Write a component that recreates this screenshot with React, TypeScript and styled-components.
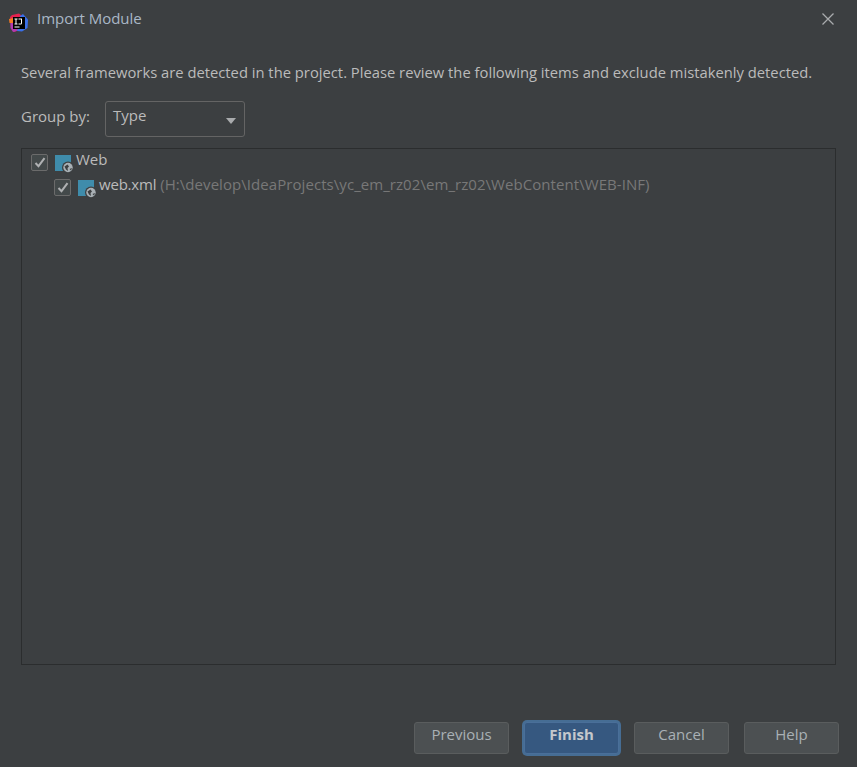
import React from 'react';
import styled, { createGlobalStyle } from 'styled-components';

const Global = createGlobalStyle`
  html, body { margin: 0; padding: 0; background: #3c3f41; }
  body { font-family: "Open Sans", "Noto Sans", sans-serif; font-size: 15px; color: #bbbbbb; }
`;

function AppLogo() {
  return (
    <LogoSvg width="20" height="20" viewBox="0 0 20 20">
      <path d="M1 4 L3 2 L10 0.5 L13 3 L12 16 L5 19 L2 14 Z" fill="#e6214f" />
      <path d="M11 3 L14 1 L19 6.5 L18.5 15 L13 18.5 L8 18 Z" fill="#3a6fe8" />
      <path d="M1.5 10 L6 10 L8 18 L4 19 L1.5 15 Z" fill="#b23ab0" />
      <path d="M0 6 L4 5 L4 10 L0.5 10 Z" fill="#f57a22" />
      <rect x="4" y="4" width="12" height="12" fill="#000000" />
      <rect x="5.5" y="13.5" width="5" height="1" fill="#ffffff" />
      <path d="M5.5 5.5 H8.5 V6.5 H7.5 V10.5 H8.5 V11.5 H5.5 V10.5 H6.5 V6.5 H5.5 Z M9.5 5.5 H13 V10 Q13 11.5 11.5 11.5 H9.5 V10.5 H12 V6.5 H9.5 Z" fill="#ffffff" />
    </LogoSvg>
  );
}

function CloseIcon() {
  return (
    <svg width="14" height="14" viewBox="0 0 14 14">
      <path d="M1.5 1.5 L12.5 12.5 M12.5 1.5 L1.5 12.5" stroke="#a9abad" strokeWidth="1.3" fill="none" />
    </svg>
  );
}

function WebIcon() {
  return (
    <FrameworkSvg width="19" height="19" viewBox="0 0 19 19">
      <rect x="0" y="0" width="16" height="16" fill="#3f8cab" />
      <circle cx="13" cy="12.5" r="6" fill="#3c3f41" />
      <circle cx="13" cy="12.5" r="4.7" fill="#a9b0b5" />
      <path d="M9.5 11.5 L12.5 9.5 L14 11.5 L12.5 13 L13 16 L11 14.5 Z M14.5 14 L17 13 L16 15.5 Z" fill="#3c3f41" />
    </FrameworkSvg>
  );
}

function CheckMark() {
  return (
    <svg width="12" height="11" viewBox="0 0 12 11">
      <path d="M1.5 6 L4.5 9.2 L10.5 1.2" stroke="#afb1b3" strokeWidth="2" fill="none" />
    </svg>
  );
}

export default function App() {
  return (
    <Dialog>
      <Global />
      <TitleBar>
        <TitleGroup>
          <AppLogo />
          <Title>Import Module</Title>
        </TitleGroup>
        <CloseButton><CloseIcon /></CloseButton>
      </TitleBar>

      <Content>
        <Description>
          Several frameworks are detected in the project. Please review the following items and exclude mistakenly detected.
        </Description>

        <GroupRow>
          <GroupLabel>Group by:</GroupLabel>
          <Combo>
            <span>Type</span>
            <Arrow />
          </Combo>
        </GroupRow>

        <TreePanel>
          <TreeRow $depth={0}>
            <Checkbox><CheckMark /></Checkbox>
            <WebIcon />
            <RowLabel>Web</RowLabel>
          </TreeRow>
          <TreeRow $depth={1}>
            <Checkbox><CheckMark /></Checkbox>
            <WebIcon />
            <RowLabel><FileName>web.xml</FileName> <PathHint>(H:\develop\IdeaProjects\yc_em_rz02\em_rz02\WebContent\WEB-INF)</PathHint></RowLabel>
          </TreeRow>
        </TreePanel>
      </Content>

      <Footer>
        <Button>Previous</Button>
        <Button $primary>Finish</Button>
        <Button>Cancel</Button>
        <Button>Help</Button>
      </Footer>
    </Dialog>
  );
}

const Dialog = styled.div`
  width: 857px;
  height: 767px;
  background: #3c3f41;
  display: flex;
  flex-direction: column;
  overflow: hidden;
`;

const TitleBar = styled.div`
  height: 37px;
  display: flex;
  align-items: center;
  justify-content: space-between;
  padding: 0 22px 0 9px;
`;

const TitleGroup = styled.div`
  display: flex;
  align-items: center;
  gap: 8px;
`;

const LogoSvg = styled.svg`
  margin-top: 8px;
`;

const FrameworkSvg = styled.svg`
  margin: 3px 0 0 7px;
  flex: none;
`;

const Title = styled.span`
  color: #a9b7c6;
  margin-bottom: 2px;
`;

const CloseButton = styled.div`
  display: flex;
`;

const Content = styled.div`
  flex: 1;
  display: flex;
  flex-direction: column;
  padding: 24px 21px 0;
`;

const Description = styled.div`
  font-size: 14.77px;
  line-height: 22px;
  white-space: nowrap;
`;

const GroupRow = styled.div`
  display: flex;
  align-items: center;
  gap: 15px;
  margin-top: 18px;
  height: 36px;
`;

const GroupLabel = styled.span`
  margin-bottom: 6px;
`;

const Combo = styled.div`
  box-sizing: border-box;
  width: 140px;
  height: 36px;
  border: 1px solid #646464;
  border-radius: 3px;
  padding: 0 8px 8px 7px;
  display: flex;
  align-items: center;
  justify-content: space-between;
`;

const Arrow = styled.div`
  width: 0;
  height: 0;
  margin-top: 12px;
  border-left: 5.5px solid transparent;
  border-right: 5.5px solid transparent;
  border-top: 6px solid #a9abad;
`;

const TreePanel = styled.div`
  box-sizing: border-box;
  width: 815px;
  height: 517px;
  margin-top: 11px;
  border: 1px solid #2b2d2e;
  padding-top: 1px;
`;

const TreeRow = styled.div<{ $depth: number }>`
  height: 25px;
  display: flex;
  align-items: center;
  padding-left: ${p => 9 + p.$depth * 23}px;
`;

const Checkbox = styled.div`
  box-sizing: border-box;
  width: 17px;
  height: 17px;
  flex: none;
  border: 1px solid #6b6b6b;
  border-radius: 2px;
  background: #43494a;
  display: flex;
  align-items: center;
  justify-content: center;
`;

const RowLabel = styled.span`
  margin-left: 2px;
  margin-bottom: 8px;
  color: #bbbbbb;
`;

const FileName = styled.span`
  letter-spacing: -0.2px;
`;

const PathHint = styled.span`
  color: #787878;
  letter-spacing: 0.06px;
`;

const Footer = styled.div`
  display: flex;
  justify-content: flex-end;
  gap: 15px;
  padding: 0 18px 13px 0;
`;

const Button = styled.div<{ $primary?: boolean }>`
  box-sizing: border-box;
  width: 95px;
  height: 32px;
  border-radius: 3px;
  border: 1px solid ${p => (p.$primary ? '#4a6f99' : '#5a5d5e')};
  background: ${p => (p.$primary ? '#365880' : '#4c5052')};
  color: ${p => (p.$primary ? '#c4c8cc' : '#a9b0b5')};
  font-weight: ${p => (p.$primary ? 700 : 400)};
  display: flex;
  align-items: center;
  justify-content: center;
  padding-bottom: 9px;
  ${p => p.$primary && 'box-shadow: 0 0 0 2px #466d94;'}
`;
